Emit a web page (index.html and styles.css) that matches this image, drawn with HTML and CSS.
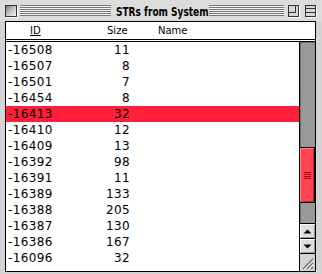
FILE: index.html
```html
<!DOCTYPE html>
<html>
<head>
<meta charset="utf-8">
<link rel="stylesheet" href="styles.css">
</head>
<body>
<div class="window">
  <div class="titlebar">
    <div class="tb-side">
      <div class="closebox"></div>
      <div class="stripes left"></div>
    </div>
    <div class="title"><span class="title-text">STRs from System</span></div>
    <div class="tb-side">
      <div class="stripes right"></div>
      <div class="zoombox"><div class="zoominner"></div></div>
      <div class="collapsebox"></div>
    </div>
  </div>
  <div class="frame">
    <div class="header">
      <span class="h-id">ID</span>
      <span class="h-size">Size</span>
      <span class="h-name">Name</span>
    </div>
    <div class="main">
      <div class="list">
        <div class="row"><span>-16508</span><span class="size">11</span></div>
        <div class="row"><span>-16507</span><span class="size">8</span></div>
        <div class="row"><span>-16501</span><span class="size">7</span></div>
        <div class="row"><span>-16454</span><span class="size">8</span></div>
        <div class="row selected"><span>-16413</span><span class="size">32</span></div>
        <div class="row"><span>-16410</span><span class="size">12</span></div>
        <div class="row"><span>-16409</span><span class="size">13</span></div>
        <div class="row"><span>-16392</span><span class="size">98</span></div>
        <div class="row"><span>-16391</span><span class="size">11</span></div>
        <div class="row"><span>-16389</span><span class="size">133</span></div>
        <div class="row"><span>-16388</span><span class="size">205</span></div>
        <div class="row"><span>-16387</span><span class="size">130</span></div>
        <div class="row"><span>-16386</span><span class="size">167</span></div>
        <div class="row"><span>-16096</span><span class="size">32</span></div>
      </div>
      <div class="scrollbar">
        <div class="track">
          <div class="thumb">
            <svg width="7" height="7" viewBox="0 0 7 7"><path d="M0 0.5H7M0 2.5H7M0 4.5H7M0 6.5H7" stroke="#a00010" stroke-width="1"/></svg>
          </div>
        </div>
        <div class="arrow">
          <svg width="9" height="5" viewBox="0 0 9 5"><path d="M4.5 0.5L8.5 4.5H0.5Z" fill="#000"/></svg>
        </div>
        <div class="arrow">
          <svg width="9" height="5" viewBox="0 0 9 5"><path d="M0.5 0.5H8.5L4.5 4.5Z" fill="#000"/></svg>
        </div>
        <div class="grow">
          <svg width="14" height="14" viewBox="0 0 14 14">
            <path d="M3 13L13 3M7 13L13 7M11 13L13 11" stroke="#666" stroke-width="1.4"/>
            <path d="M4 13.5L13.5 4M8 13.5L13.5 8" stroke="#fff" stroke-width="0.8"/>
          </svg>
        </div>
      </div>
    </div>
  </div>
</div>
</body>
</html>
```

FILE: styles.css
```css
html, body {
  margin: 0;
  padding: 0;
}
body {
  width: 322px;
  height: 274px;
  overflow: hidden;
  background: #cccccc;
  font-family: "DejaVu Sans", Verdana, sans-serif;
  font-size: 12px;
  color: #000;
}
.window {
  height: 274px;
  display: flex;
  flex-direction: column;
  background: #d4d4d4;
}
.titlebar {
  height: 21px;
  box-sizing: border-box;
  padding: 5px 6px 0 5px;
  display: grid;
  grid-template-columns: 1fr auto 1fr;
  align-items: start;
  background: #dcdcdc;
}
.tb-side {
  display: flex;
  align-items: flex-start;
}
.closebox {
  width: 12px;
  height: 12px;
  box-sizing: border-box;
  border: 1px solid #333;
  background: linear-gradient(135deg, #7a7a7a 0%, #bdbdbd 45%, #f4f4f4 100%);
  box-shadow: 1px 1px 0 #fff;
}
.stripes {
  flex: 1;
  height: 11px;
  background: repeating-linear-gradient(to bottom, #777 0 1px, #f4f4f4 1px 2px);
}
.stripes.left {
  margin: 0 4px 0 3px;
}
.stripes.right {
  margin: 0 4px 0 2px;
}
.title {
  width: 90px;
  height: 12px;
  padding: 0 1px;
  overflow: visible;
  white-space: nowrap;
}
.title-text {
  display: inline-block;
  font-family: "DejaVu Sans Condensed", "DejaVu Sans", sans-serif;
  font-weight: bold;
  font-size: 12.5px;
  line-height: 12px;
  transform: scaleX(0.8);
  transform-origin: left center;
}
.zoombox, .collapsebox {
  width: 11px;
  height: 12px;
  box-sizing: border-box;
  border: 1px solid #333;
  background: #d8d8d8;
  box-shadow: 1px 1px 0 #fff;
}
.zoominner {
  width: 6px;
  height: 6px;
  border-right: 1px solid #333;
  border-bottom: 1px solid #333;
}
.collapsebox {
  margin-left: 6px;
  background: linear-gradient(to bottom, #d8d8d8 0 2px, #333 2px 3px, #d8d8d8 3px 6px, #333 6px 7px, #d8d8d8 7px);
}
.frame {
  flex: 1;
  margin: 0 6px 2px 5px;
  border: 1px solid #000;
  display: flex;
  flex-direction: column;
  background: #fff;
  min-height: 0;
}
.header {
  height: 17px;
  display: flex;
  align-items: center;
  border-bottom: 3px double #000;
  padding-left: 24px;
  line-height: 17px;
  font-size: 10px;
}
.h-id {
  width: 77px;
  text-decoration: underline;
}
.h-size {
  width: 51px;
}
.main {
  flex: 1;
  display: flex;
  min-height: 0;
}
.list {
  flex: 1;
  display: flex;
  flex-direction: column;
}
.row {
  height: 16px;
  line-height: 17px;
  display: grid;
  grid-template-columns: 70px 52px;
  padding-left: 2px;
  letter-spacing: 0.4px;
}
.row .size {
  text-align: right;
}
.row.selected {
  background: #ff1f3a;
}
.scrollbar {
  width: 15px;
  border-left: 1px solid #000;
  display: flex;
  flex-direction: column;
}
.track {
  flex: 1;
  background: #999;
  box-shadow: inset 1px 1px 0 #6e6e6e;
  display: flex;
  flex-direction: column;
}
.thumb {
  margin-top: 105px;
  height: 56px;
  box-sizing: border-box;
  border-top: 1px solid #000;
  border-bottom: 1px solid #000;
  border-right: 1px solid #000;
  background: #ff4455;
  box-shadow: inset 1px 1px 0 #ff8a94, inset -1px -1px 0 #c81e30;
  display: flex;
  align-items: center;
  justify-content: center;
}
.thumb svg {
  display: block;
}
.arrow {
  height: 15px;
  box-sizing: border-box;
  border-top: 1px solid #000;
  background: #dedede;
  box-shadow: inset 1px 1px 0 #fff, inset -1px -1px 0 #999;
  display: flex;
  align-items: center;
  justify-content: center;
}
.arrow svg {
  display: block;
}
.grow {
  height: 18px;
  box-sizing: border-box;
  border-top: 1px solid #000;
  background: #d4d4d4;
  display: flex;
  align-items: flex-end;
  justify-content: flex-end;
  padding: 0 1px 1px 0;
}
.grow svg {
  display: block;
}
```
